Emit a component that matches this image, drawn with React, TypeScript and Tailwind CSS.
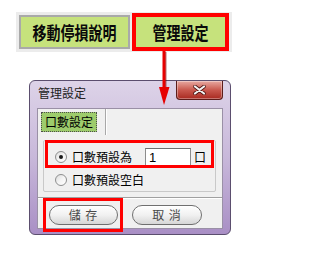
import React from "react";

const Radio = ({ checked }: { checked?: boolean }) => (
  <span className="w-[12px] h-[12px] shrink-0 rounded-full border border-[#8e8f8f] bg-linear-to-br from-[#dcdcdc] via-[#f4f4f4] to-white flex items-center justify-center">
    {checked && <span className="w-[4px] h-[4px] rounded-full bg-[#1a1a1a]" />}
  </span>
);

const PillButton = ({ label, width }: { label: string; width: string }) => (
  <div
    className={`${width} h-[20px] rounded-full border border-[#6f6f6f] bg-linear-to-b from-[#fefefe] via-[#f1f1f1] to-[#d6d6d6] shadow-[inset_0_1px_0_#fff] flex items-center justify-center text-[12px] leading-none text-[#4a4a4a] tracking-[1px]`}
  >
    {label}
  </div>
);

const CloseButton = () => (
  <div className="w-[47px] h-[19px] rounded-b-[4px] border border-t-0 border-[#5c1d1a] bg-linear-to-b from-[#e7a9a2] via-[#c9584e] to-[#a8271f] shadow-[inset_0_0_0_1px_rgba(255,255,255,0.35)] flex items-center justify-center">
    <svg width="13" height="10" viewBox="0 0 13 10">
      <path d="M2 1.5 L11 8.5 M11 1.5 L2 8.5" stroke="#4a1210" strokeWidth="3.6" strokeLinecap="round" />
      <path d="M2 1.5 L11 8.5 M11 1.5 L2 8.5" stroke="#f4f4f4" strokeWidth="2.2" strokeLinecap="round" />
    </svg>
  </div>
);

export default function App() {
  return (
    <div className="relative w-[271px] h-[253px] bg-white overflow-hidden pt-[12px] font-['Noto_Sans_CJK_TC','Noto_Sans',sans-serif]">
      {/* TOP MENU */}
      <div className="ml-[16px] w-[216px] h-[40px] bg-[#ececec] flex items-center pl-[3px] gap-[2px]">
        <div className="w-[111px] h-[34px] border-2 border-[#a9a9a9] bg-[#c6e27c] flex items-center justify-center">
          <span className="text-[14px] leading-none font-semibold text-[#0a0a0a] scale-y-[1.3]">移動停損說明</span>
        </div>
        <div className="w-[97px] h-[38px] border-4 border-[#ff0000] bg-[#c6e27c] flex items-center justify-center">
          <span className="text-[14px] leading-none font-semibold text-[#0a0a0a] scale-y-[1.3]">管理設定</span>
        </div>
      </div>

      {/* DIALOG */}
      <div className="ml-[29px] mt-[28px] w-[202px] h-[155px] rounded-[6px] border border-[#5b4e6e] bg-linear-to-b from-[#ddd3e8] via-[#c8b8da] to-[#a98fc5] flex flex-col">
        <div className="h-[27px] flex items-start justify-between pl-[8px] pr-[7px]">
          <span className="mt-[4px] text-[12px] leading-[16px] text-[#222]">管理設定</span>
          <CloseButton />
        </div>
        <div className="mx-[7px] h-[121px] bg-[#f0f0f0] border border-[#9a90a6] flex flex-col">
          {/* TAB */}
          <div className="h-[26px] flex">
            <div className="w-[68px] h-[26px] border-r border-[#a8a8a8] shadow-[1px_0_0_#fff]">
              <div className="ml-[3px] mt-[3px] w-[56px] h-[20px] bg-[#9dcc6c] border border-dotted border-[#4d4d4d] flex items-center justify-center text-[12px] leading-none text-black">
                口數設定
              </div>
            </div>
          </div>
          {/* GROUP */}
          <div className="ml-[5px] mt-[5px] w-[173px] h-[52px] border border-[#c9c9c9] rounded-[2px] flex flex-col pt-[7px] gap-[5px]">
            <div className="h-[18px] flex items-center">
              <span className="ml-[11px]"><Radio checked /></span>
              <span className="ml-[5px] w-[73px] text-[12px] leading-none text-black">口數預設為</span>
              <div className="w-[46px] h-[18px] bg-white border border-[#8c8c8c] border-t-[#6e6e6e] flex items-center pl-[3px] text-[13px] leading-none text-black font-['Liberation_Sans',sans-serif]">
                1
              </div>
              <span className="ml-[3px] text-[12px] leading-none text-black">口</span>
            </div>
            <div className="h-[18px] flex items-center">
              <span className="ml-[11px]"><Radio /></span>
              <span className="ml-[5px] text-[12px] leading-none text-black">口數預設空白</span>
            </div>
          </div>
          {/* SEPARATOR */}
          <div className="mt-[5px] h-0 border-t border-[#a0a0a0] shadow-[0_1px_0_#fff]" />
          {/* BUTTONS */}
          <div className="mt-[7px] pl-[11px] flex gap-[14px]">
            <PillButton label="儲 存" width="w-[69px]" />
            <PillButton label="取 消" width="w-[70px]" />
          </div>
        </div>
      </div>

      {/* ARROW */}
      <svg className="absolute left-[157px] top-[51px]" width="14" height="56" viewBox="0 0 14 56">
        <rect x="8" y="1" width="1.5" height="37" fill="#7a0000" opacity="0.55" />
        <rect x="5.5" y="0" width="3" height="38" fill="#e60000" />
        <polygon points="2,36 12.5,36 7,54" fill="#e60000" />
      </svg>

      {/* HIGHLIGHTS */}
      <div className="absolute left-[45px] top-[140px] w-[169px] h-[28px] border-[3px] border-[#ff0000]" />
      <div className="absolute left-[43px] top-[198px] w-[80px] h-[34px] border-[3px] border-[#ff0000]" />
    </div>
  );
}
